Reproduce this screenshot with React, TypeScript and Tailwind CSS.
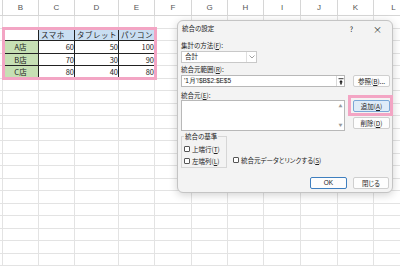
const LETTERS = ["", "B", "C", "D", "E", "F", "G", "H", "I", "J", "K", "L"];

const TABLE: string[][] = [
  ["", "スマホ", "タブレット", "パソコン"],
  ["A店", "60", "50", "100"],
  ["B店", "70", "30", "90"],
  ["C店", "80", "40", "80"],
];

const ROWS = Array.from({ length: 20 }, (_, i) => i);

function Cell({ r, c }: { r: number; c: number }) {
  const inTable = r >= 1 && r <= 4 && c >= 1 && c <= 4;
  if (!inTable) {
    const edgeBottom = r === 0 && c >= 1 && c <= 4;
    const edgeRight = c === 0 && r >= 1 && r <= 4;
    return (
      <div
        className={`border-b border-r ${edgeBottom ? "border-b-[#222]" : "border-b-[#e3e3e3]"} ${
          edgeRight ? "border-r-[#222]" : "border-r-[#e3e3e3]"
        }`}
      />
    );
  }
  const text = TABLE[r - 1][c - 1];
  if (r === 1) {
    return (
      <div
        className={`border-b border-r border-[#222] pl-[2px] text-[7.5px] leading-[11px] tracking-[0.5px] text-[#222] whitespace-nowrap overflow-hidden ${
          c === 1 ? "bg-white" : "bg-[#c9def2]"
        }`}
      >
        {text}
      </div>
    );
  }
  if (c === 1) {
    return (
      <div className="border-b border-r border-[#222] bg-[#c6e0b4] text-center text-[7.5px] leading-[11px] text-[#222]">
        {text}
      </div>
    );
  }
  return (
    <div className="border-b border-r border-[#222] bg-white text-right text-[7.5px] leading-[11px] text-[#222]">
      {text}
    </div>
  );
}

function Sheet() {
  return (
    <div className="grid grid-cols-[3px_36px_36px_44px_36px_37px_36px_36px_37px_37px_36px_40px] grid-rows-[16px_repeat(20,12.5px)]">
      {LETTERS.map((l, i) => (
        <div
          key={`h${i}`}
          className="flex items-center justify-center border-b border-r border-[#d6d6d6] text-[8px] text-[#555] font-['Liberation_Sans',sans-serif]"
        >
          {l}
        </div>
      ))}
      {ROWS.map((r) => LETTERS.map((_, c) => <Cell key={`${r}-${c}`} r={r} c={c} />))}
    </div>
  );
}

function Check({ label }: { label: React.ReactNode }) {
  return (
    <div className="flex items-center gap-[2px] h-[12px]">
      <span className="w-[6px] h-[6px] rounded-[1px] border border-[#555] bg-white" />
      <span className="leading-[8px]">{label}</span>
    </div>
  );
}

function Btn({ children, className = "" }: { children: React.ReactNode; className?: string }) {
  return (
    <div
      className={`flex h-[12px] items-center justify-center rounded-[2px] border text-[6.5px] leading-none ${className}`}
    >
      {children}
    </div>
  );
}

function Dialog() {
  return (
    <div className="absolute left-[177px] top-[20px] w-[216px] h-[173px] rounded-[6px] border border-[#c4c4c4] bg-[#f3f3f3] shadow-[0_2px_8px_rgba(0,0,0,0.18)] pl-[3px] pr-[2px] text-[#222] text-[6.5px] [font-feature-settings:'palt']">
      {/* title bar */}
      <div className="flex h-[16px] items-center">
        <span className="ml-[1px] text-[6.5px]">統合の設定</span>
        <span className="ml-auto mr-[20px] text-[7px]">?</span>
        <span className="mr-[8px] text-[9px] leading-none text-[#333]">×</span>
      </div>

      <div className="mt-[4px] leading-[8px]">
        集計の方法(<u>F</u>):
      </div>
      <div className="mt-[2px] flex h-[12px] w-[76px] items-center border border-[#c8c8c8] bg-white">
        <span className="ml-[3px] flex-1">合計</span>
        <span className="flex h-full w-[10px] items-center justify-center border-l border-[#e0e0e0]">
          <svg width="6" height="4" viewBox="0 0 6 4">
            <path d="M0.5 0.5 L3 3 L5.5 0.5" fill="none" stroke="#888" strokeWidth="0.8" />
          </svg>
        </span>
      </div>

      <div className="mt-[2px] leading-[8px]">
        統合元範囲(<u>R</u>):
      </div>
      <div className="mt-[2px] flex gap-[8px]">
        <div className="flex h-[12px] w-[164px] items-center border border-[#b8b8b8] bg-white">
          <span className="ml-[2px] flex-1 font-['Liberation_Sans',sans-serif] text-[6.5px]">'1月'!$B$2:$E$5</span>
          <span className="flex h-full w-[8px] items-center justify-center border-l border-[#d8d8d8]">
            <svg width="6" height="7" viewBox="0 0 6 7">
              <path d="M0.5 0.7 H5.5" stroke="#222" strokeWidth="0.9" />
              <path d="M3 2 L5 4.2 H3.8 V6.5 H2.2 V4.2 H1 Z" fill="#222" />
            </svg>
          </span>
        </div>
        <Btn className="w-[37px] border-[#cfcfcf] bg-[#fdfdfd]">
          参照(<u>B</u>)...
        </Btn>
      </div>

      <div className="mt-[4px] leading-[8px]">
        統合元(<u>E</u>):
      </div>
      <div className="mt-[1px] flex gap-[8px]">
        <div className="flex h-[31px] w-[164px] justify-end border border-[#b8b8b8] bg-white">
          <div className="flex w-[7px] flex-col items-center justify-between py-[3px] text-[4px] leading-none text-[#999]">
            <span>▲</span>
            <span>▼</span>
          </div>
        </div>
        <div className="flex flex-col gap-[5px]">
          <div className="relative">
            <Btn className="w-[37px] border-[#7aa7d6] bg-[#dfecf8]">
              追加(<u>A</u>)
            </Btn>
            <div className="absolute -left-[5px] -right-[3px] -top-[5px] -bottom-[4px] border-[3px] border-[#f3a5c4]" />
          </div>
          <Btn className="w-[37px] border-[#cfcfcf] bg-[#fdfdfd]">
            削除(<u>D</u>)
          </Btn>
        </div>
      </div>

      <div className="mt-[5px] flex items-end gap-[6px]">
        <div className="relative h-[32px] w-[46px] border border-[#d6d6d6] pl-[2px] pt-[6px]">
          <span className="absolute left-[2px] -top-[5px] bg-[#f3f3f3] px-[1px] leading-[8px]">統合の基準</span>
          <Check label={<>上端行(<u>T</u>)</>} />
          <Check label={<>左端列(<u>L</u>)</>} />
        </div>
        <div className="mb-[2px]">
          <Check label={<>統合元データとリンクする(<u>S</u>)</>} />
        </div>
      </div>

      <div className="mt-[9px] flex justify-end gap-[6px]">
        <Btn className="w-[37px] border-[#3f7fbf] bg-[#fdfdfd] font-['Liberation_Sans',sans-serif]">OK</Btn>
        <Btn className="w-[36px] border-[#cfcfcf] bg-[#fdfdfd] mr-[1px]">閉じる</Btn>
      </div>
    </div>
  );
}

export default function App() {
  return (
    <div className="relative h-[268px] w-[400px] overflow-hidden bg-white font-['Noto_Sans_CJK_JP',sans-serif]">
      <Sheet />
      <div className="absolute left-[2px] top-[27px] h-[53px] w-[155px] border-[3px] border-[#f3a5c4]" />
      <Dialog />
    </div>
  );
}
